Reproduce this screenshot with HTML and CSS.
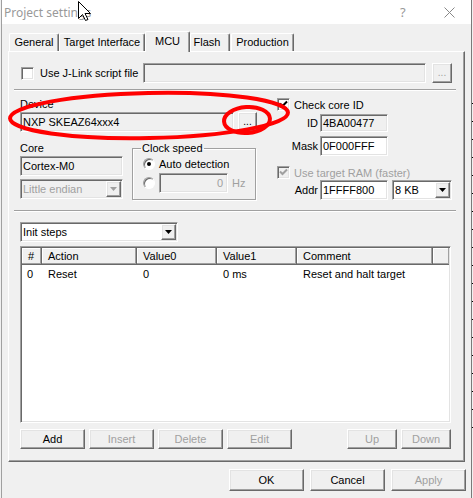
FILE: index.html
```html
<!doctype html>
<html lang="en">
  <head>
    <meta charset="UTF-8" />
    <title>Project settings</title>
    <link rel="stylesheet" href="styles.css">
  </head>
  <body>
    <div class="dialog">
      <div class="titlebar">
        <span class="title">Project settings</span>
        <span class="help">?</span>
        <svg class="close" width="11" height="11" viewBox="0 0 11 11">
          <path d="M0.5 0.5 L10.5 10.5 M10.5 0.5 L0.5 10.5" />
        </svg>
      </div>

      <div class="tabs">
        <div class="tab tab-general">General</div>
        <div class="tab tab-target">Target Interface</div>
        <div class="tab tab-mcu active">MCU</div>
        <div class="tab tab-flash">Flash</div>
        <div class="tab tab-production">Production</div>
      </div>

      <div class="panel">
        <div class="script-row">
          <span class="check"></span>
          <span class="script-label">Use J-Link script file</span>
          <span class="edit readonly script-file"></span>
          <span class="button dots muted">...</span>
        </div>

        <div class="separator"></div>

        <div class="device-area">
          <div class="device-col">
            <div class="label">Device</div>
            <div class="device-row">
              <div class="edit readonly device-name">NXP SKEAZ64xxx4</div>
              <div class="button dots">...</div>
            </div>
            <div class="core-row">
              <div class="core-col">
                <div class="label">Core</div>
                <div class="edit readonly core-name">Cortex-M0</div>
                <div class="edit readonly combo endian muted">
                  Little endian
                  <span class="drop disabled"></span>
                </div>
              </div>
              <fieldset class="group">
                <legend>Clock speed</legend>
                <div class="radio-row">
                  <span class="radio on"></span>
                  <span>Auto detection</span>
                </div>
                <div class="radio-row freq-row">
                  <span class="radio"></span>
                  <span class="edit readonly freq muted">0</span>
                  <span class="muted">Hz</span>
                </div>
              </fieldset>
            </div>
          </div>

          <div class="id-col">
            <div class="check-row">
              <span class="check checked">
                <svg width="9" height="9" viewBox="0 0 9 9"><path d="M1 3.5 L3.5 6 L8 1.5" /></svg>
              </span>
              <span>Check core ID</span>
            </div>
            <div class="field-row id-row">
              <span class="field-label">ID</span>
              <span class="edit readonly hex">4BA00477</span>
            </div>
            <div class="field-row">
              <span class="field-label">Mask</span>
              <span class="edit hex">0F000FFF</span>
            </div>
            <div class="check-row ram-row">
              <span class="check checked disabled">
                <svg width="9" height="9" viewBox="0 0 9 9"><path d="M1 3.5 L3.5 6 L8 1.5" /></svg>
              </span>
              <span class="muted">Use target RAM (faster)</span>
            </div>
            <div class="field-row">
              <span class="field-label">Addr</span>
              <span class="edit hex">1FFFF800</span>
              <span class="edit combo ram-size">8 KB<span class="drop"></span></span>
            </div>
          </div>
        </div>

        <div class="separator second"></div>

        <div class="edit combo steps-type">Init steps<span class="drop"></span></div>

        <div class="list">
          <div class="list-head">
            <span>#</span>
            <span>Action</span>
            <span>Value0</span>
            <span>Value1</span>
            <span>Comment</span>
            <span></span>
          </div>
          <div class="list-row">
            <span class="num">0</span>
            <span>Reset</span>
            <span>0</span>
            <span>0 ms</span>
            <span>Reset and halt target</span>
          </div>
        </div>

        <div class="step-buttons">
          <span class="button wide">Add</span>
          <span class="button wide muted">Insert</span>
          <span class="button wide muted">Delete</span>
          <span class="button wide muted">Edit</span>
          <span class="button narrow muted up">Up</span>
          <span class="button narrow muted">Down</span>
        </div>
      </div>

      <div class="footer">
        <span class="button footer-button">OK</span>
        <span class="button footer-button">Cancel</span>
        <span class="button footer-button muted">Apply</span>
      </div>
    </div>

    <!-- red marks drawn over the screenshot -->
    <svg class="marks" width="473" height="498" viewBox="0 0 473 498">
      <ellipse cx="149" cy="115.5" rx="139" ry="22.5" transform="rotate(-1.2 149 115.5)" />
      <ellipse cx="247" cy="120" rx="23" ry="13" transform="rotate(-4 247 120)" />
    </svg>

    <svg class="cursor" width="14" height="21" viewBox="0 0 14 21">
      <path d="M0.5 0.5 V17.5 L4.5 13.5 L7.5 19.5 L10 18.5 L7 12.5 H12.5 Z" />
    </svg>
  </body>
</html>
```

FILE: styles.css
```css
* {
  box-sizing: border-box;
}

body {
  margin: 0;
  width: 473px;
  height: 498px;
  overflow: hidden;
  position: relative;
  font-family: "Liberation Sans", Arial, sans-serif;
  font-size: 11px;
  color: #000;
  background:
    repeating-linear-gradient(#f0f0f0 0 17px, #000 17px 18px) 472px 86px / 1px 350px no-repeat,
    #f0f0f0;
}

.dialog {
  width: 471px;
  height: 498px;
  margin-left: 1px;
  border-left: 1px solid #a0a0a0;
  border-right: 1px solid #7a7a7a;
  background: #f0f0f0;
}

/* title bar */
.titlebar {
  height: 24px;
  display: flex;
  align-items: center;
  padding-left: 2px;
  background: #fff;
}

.title {
  flex: 1;
  font-family: "Noto Sans", sans-serif;
  font-size: 12px;
  color: #999;
}

.help {
  width: 7px;
  margin-right: 37px;
  font-family: "Noto Sans", sans-serif;
  font-size: 13px;
  color: #999;
}

.close {
  margin-right: 16px;
}

.close path {
  stroke: #888;
  stroke-width: 1;
  fill: none;
}

/* tabs */
.tabs {
  display: flex;
  align-items: flex-end;
  height: 20px;
  margin: 7px 0 0 7px;
  position: relative;
  z-index: 1;
}

.tab {
  height: 18px;
  line-height: 16px;
  text-align: center;
  background: #f0f0f0;
  border: 1px solid;
  border-color: #fff #696969 transparent #fff;
  border-bottom: none;
  border-radius: 2px 2px 0 0;
  box-shadow: inset -1px 0 #a0a0a0;
}

.tab.active {
  height: 21px;
  line-height: 18px;
  margin-bottom: -1px;
}

.tab-general { width: 50px; }
.tab-target { width: 86px; }
.tab-mcu { width: 45px; }
.tab-flash { width: 40px; padding-right: 6px; }
.tab-production { width: 63px; margin-left: 1px; }

/* tab page */
.panel {
  width: 457px;
  height: 411px;
  margin-left: 6px;
  padding: 11px 0 0 11px;
  border: 1px solid;
  border-color: #fff #696969 #696969 #fff;
  box-shadow: inset -1px -1px #a0a0a0;
}

.separator {
  width: 442px;
  height: 2px;
  margin: 6px 0 0 -6px;
  border-top: 1px solid #a0a0a0;
  border-bottom: 1px solid #fff;
}

.separator.second {
  margin-top: 10px;
}

.muted {
  color: #a0a0a0;
}

/* 3d controls */
.button {
  display: flex;
  align-items: center;
  justify-content: center;
  background: #f0f0f0;
  border: 1px solid;
  border-color: #fff #696969 #696969 #fff;
  box-shadow: inset -1px -1px #a0a0a0, inset 1px 1px #e3e3e3;
}

.edit {
  display: flex;
  align-items: center;
  height: 20px;
  padding-left: 2px;
  background: #fff;
  border: 1px solid;
  border-color: #a0a0a0 #fff #fff #a0a0a0;
  box-shadow: inset 1px 1px #696969, inset -1px -1px #e3e3e3;
  white-space: nowrap;
}

.edit.readonly {
  background: #f0f0f0;
}

.combo {
  padding-right: 1px;
}

.drop {
  width: 15px;
  height: 16px;
  margin-left: auto;
  display: flex;
  align-items: center;
  justify-content: center;
  background: #f0f0f0;
  border: 1px solid;
  border-color: #fff #696969 #696969 #fff;
  box-shadow: inset -1px -1px #a0a0a0, inset 1px 1px #e3e3e3;
}

.drop::after {
  content: "";
  width: 7px;
  height: 4px;
  background: #000;
  clip-path: polygon(0 0, 100% 0, 50% 100%);
}

.drop.disabled::after {
  background: #a0a0a0;
}

.check {
  flex: none;
  width: 13px;
  height: 13px;
  display: flex;
  align-items: center;
  justify-content: center;
  background: #fff;
  border: 1px solid;
  border-color: #a0a0a0 #fff #fff #a0a0a0;
  box-shadow: inset 1px 1px #696969, inset -1px -1px #e3e3e3;
}

.check path {
  fill: none;
  stroke: #000;
  stroke-width: 2;
}

.check.disabled {
  background: #f0f0f0;
}

.check.disabled path {
  stroke: #a0a0a0;
}

.radio {
  flex: none;
  width: 12px;
  height: 12px;
  display: flex;
  align-items: center;
  justify-content: center;
  border-radius: 50%;
  background: #fff;
  border: 1px solid;
  border-color: #a0a0a0 #fff #fff #a0a0a0;
  box-shadow: inset 1px 1px #696969;
}

.radio.on::after {
  content: "";
  width: 4px;
  height: 4px;
  border-radius: 50%;
  background: #000;
}

/* script file row */
.script-row {
  display: flex;
  align-items: center;
  width: 432px;
  height: 20px;
}

.script-row .check {
  margin-left: 1px;
}

.script-label {
  margin-left: 6px;
}

.script-file {
  width: 283px;
  margin-left: auto;
}

.dots {
  width: 20px;
  height: 20px;
  margin-left: 6px;
  padding-bottom: 2px;
  font-size: 10px;
}

/* device section */
.device-area {
  display: flex;
  height: 109px;
}

.device-col {
  width: 237px;
}

.label {
  height: 14px;
  line-height: 14px;
  margin-top: 6px;
}

.device-row {
  display: flex;
  margin-top: 1px;
}

.device-name {
  width: 214px;
}

.device-row .dots {
  width: 19px;
  margin-left: 4px;
}

.core-row {
  display: flex;
  margin-top: 9px;
}

.core-row .label {
  margin-top: 0;
}

.core-col {
  width: 103px;
}

.core-name {
  margin-top: 1px;
}

.endian {
  margin-top: 3px;
}

.group {
  width: 124px;
  margin: 0 0 0 9px;
  padding: 0 0 6px 10px;
  min-width: 0;
  border: 1px solid #a0a0a0;
  box-shadow: inset 1px 1px #fff, 1px 1px #fff;
}

.group legend {
  margin-left: -2px;
  padding: 0 1px;
  line-height: 14px;
}

.radio-row {
  display: flex;
  align-items: center;
  gap: 4px;
  height: 14px;
  margin-top: 2px;
}

.freq-row {
  height: 20px;
}

.freq {
  width: 69px;
  justify-content: flex-end;
  padding-right: 4px;
}

.id-col {
  width: 175px;
  margin-left: 20px;
}

.check-row {
  display: flex;
  align-items: center;
  gap: 4px;
  height: 13px;
  margin-top: 7px;
}

.field-row {
  display: flex;
  align-items: center;
  height: 20px;
  margin-top: 4px;
}

.id-row {
  height: 18px;
  margin-top: 3px;
}

.id-row .edit {
  height: 18px;
}

.ram-row {
  margin-top: 10px;
}

.ram-row + .field-row {
  margin-top: 1px;
}

.field-label {
  width: 41px;
  margin-right: 2px;
  text-align: right;
}

.hex {
  width: 68px;
}

.ram-size {
  width: 60px;
  margin-left: 4px;
}

/* init steps */
.steps-type {
  width: 158px;
  margin-top: 10px;
}

.list {
  width: 431px;
  height: 177px;
  margin-top: 4px;
  background: #fff;
  border: 1px solid;
  border-color: #a0a0a0 #fff #fff #a0a0a0;
  box-shadow: inset 1px 1px #696969, inset -1px -1px #e3e3e3;
  padding: 1px;
}

.list-head,
.list-row {
  display: grid;
  grid-template-columns: 20px 95px 80px 80px 136px 1fr;
}

.list-head span {
  height: 17px;
  line-height: 16px;
  padding-left: 6px;
  background: #f0f0f0;
  border-right: 1px solid #696969;
  border-bottom: 1px solid #696969;
  box-shadow: inset -1px -1px #a0a0a0, inset 1px 1px #fff;
}

.list-head span:last-child {
  border-right: none;
}

.list-row span {
  height: 18px;
  line-height: 18px;
  padding-left: 6px;
  white-space: nowrap;
}

.list-row .num {
  padding-left: 5px;
}

.step-buttons {
  display: flex;
  gap: 4px;
  width: 431px;
  margin-top: 6px;
}

.step-buttons .button {
  height: 20px;
}

.wide {
  width: 65px;
}

.narrow {
  width: 50px;
}

.up {
  margin-left: auto;
}

/* dialog buttons */
.footer {
  display: flex;
  justify-content: flex-end;
  gap: 6px;
  margin-top: 7px;
  padding-right: 5px;
}

.footer-button {
  width: 75px;
  height: 22px;
}

/* overlays */
.marks {
  position: absolute;
  top: 0;
  left: 0;
  pointer-events: none;
}

.marks ellipse {
  fill: none;
  stroke: #f00;
  stroke-width: 4;
}

.cursor {
  position: absolute;
  top: 1px;
  left: 78px;
}

.cursor path {
  fill: #fff;
  stroke: #000;
  stroke-width: 1;
}
```
